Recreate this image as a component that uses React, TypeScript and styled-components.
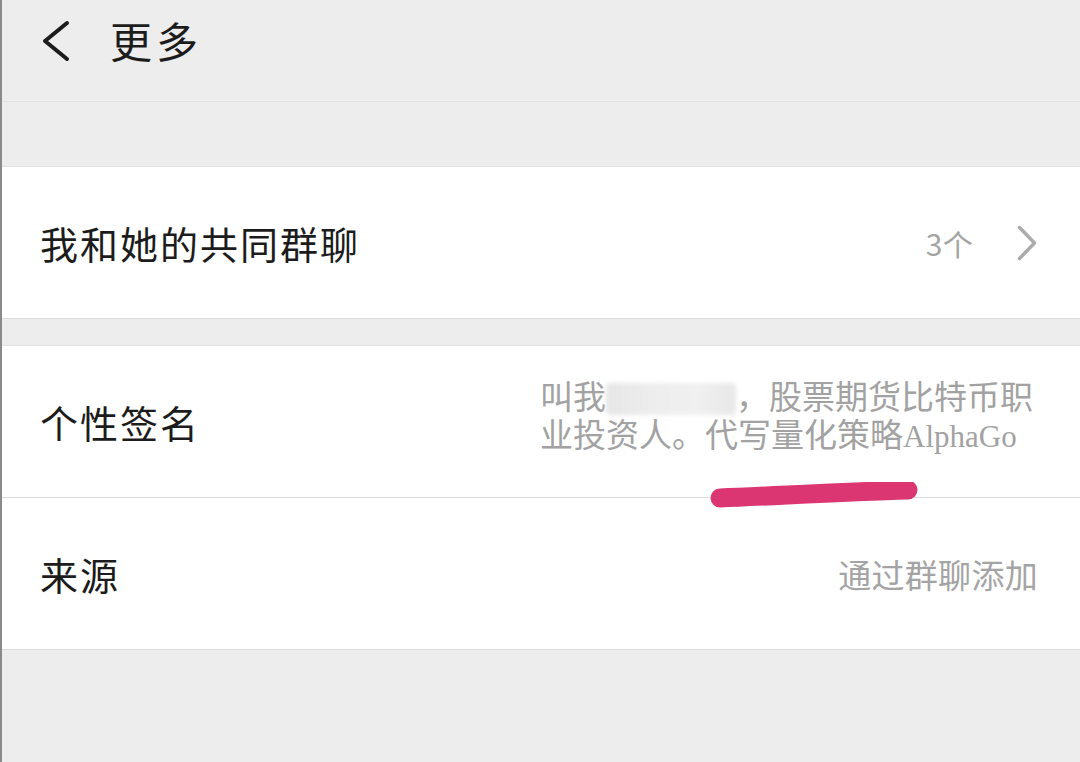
import React from "react";
import styled, { createGlobalStyle } from "styled-components";

const Global = createGlobalStyle`
  html, body { margin: 0; padding: 0; background: #ededed; }
  body { font-family: "Noto Sans CJK SC", "Noto Sans", sans-serif; }
`;

const Page = styled.div`
  width: 1080px;
  height: 762px;
  box-sizing: border-box;
  border-left: 2px solid #8a8a8a;
  background: #ededed;
  display: flex;
  flex-direction: column;
  overflow: hidden;
`;

const Header = styled.header`
  height: 101px;
  flex-shrink: 0;
  display: flex;
  align-items: center;
  padding-left: 38px;
  border-bottom: 1px solid #e2e2e2;
  box-sizing: content-box;
  color: #1c1c1c;
`;

const BackBtn = styled.div`
  width: 32px;
  height: 42px;
  display: flex;
  align-items: center;
  margin-right: 38px;
  margin-top: -20px;
`;

const Title = styled.h1`
  margin: 0;
  margin-top: -22px;
  font-size: 42px;
  font-weight: 400;
  letter-spacing: 4px;
`;

const Gap = styled.div<{ $h: number }>`
  height: ${(p) => p.$h}px;
  flex-shrink: 0;
  border-bottom: 1px solid #e2e2e2;
`;

const Section = styled.section`
  background: #fff;
  display: flex;
  flex-direction: column;
  border-bottom: 1px solid #dcdcdc;
`;

const Row = styled.div<{ $divider?: boolean }>`
  position: relative;
  height: 151px;
  display: flex;
  align-items: center;
  justify-content: space-between;
  padding: 0 42px 0 38px;
  ${(p) => (p.$divider ? "border-bottom: 1px solid #dcdcdc;" : "")}
`;

const Label = styled.div`
  font-size: 38px;
  color: #1c1c1c;
  letter-spacing: 2px;
  flex-shrink: 0;
`;

const Right = styled.div`
  display: flex;
  align-items: center;
  gap: 43px;
  margin-right: 0;
`;

const Value = styled.div<{ $size?: number }>`
  font-size: ${(p) => p.$size ?? 33}px;
  color: #a4a4a4;
  letter-spacing: 0.3px;
`;

const Signature = styled.div`
  width: 498px;
  font-family: "Liberation Serif", "Noto Sans CJK SC", serif;
  font-size: 33px;
  line-height: 38px;
  color: #a2a2a2;
  margin-top: -8px;
`;

const Latin = styled.span`
  font-size: 31px;
`;

const Masked = styled.span`
  display: inline-block;
  width: 130px;
  height: 32px;
  vertical-align: -6px;
  background: linear-gradient(90deg, #e6e6e6, #eeeeee 40%, #f0f0f0 70%, #e8e8e8);
  filter: blur(2px);
  border-radius: 4px;
`;

const Scribble = styled.svg`
  position: absolute;
  left: 670px;
  top: 136px;
  z-index: 2;
`;

const Chevron = ({ color, w, h, sw }: { color: string; w: number; h: number; sw: number }) => (
  <svg width={w} height={h} viewBox={`0 0 ${w} ${h}`}>
    <polyline
      points={`${sw},${sw} ${w - sw},${h / 2} ${sw},${h - sw}`}
      fill="none"
      stroke={color}
      strokeWidth={sw}
      strokeLinecap="round"
      strokeLinejoin="round"
    />
  </svg>
);

const BackIcon = () => (
  <svg width="32" height="42" viewBox="0 0 32 42">
    <polyline
      points="27,3 5,21 27,39"
      fill="none"
      stroke="#1c1c1c"
      strokeWidth="4"
      strokeLinecap="round"
      strokeLinejoin="round"
    />
  </svg>
);

export default function App() {
  return (
    <>
      <Global />
      <Page>
        <Header>
          <BackBtn>
            <BackIcon />
          </BackBtn>
          <Title>更多</Title>
        </Header>
        <Gap $h={64} />
        <Section>
          <Row>
            <Label>我和她的共同群聊</Label>
            <Right>
              <Value $size={30}>3个</Value>
              <Chevron color="#ababab" w={22} h={38} sw={3.5} />
            </Right>
          </Row>
        </Section>
        <Gap $h={26} />
        <Section>
          <Row $divider>
            <Label>个性签名</Label>
            <Signature>
              叫我<Masked />，股票期货比特币职业投资人。代写量化策略<Latin>AlphaGo</Latin>
            </Signature>
            <Scribble width="260" height="40" viewBox="0 0 260 40">
              <path
                d="M48 16 C 100 14, 170 10, 236 8"
                fill="none"
                stroke="#dc3672"
                strokeWidth="19"
                strokeLinecap="round"
              />
            </Scribble>
          </Row>
          <Row>
            <Label>来源</Label>
            <Value>通过群聊添加</Value>
          </Row>
        </Section>
      </Page>
    </>
  );
}
